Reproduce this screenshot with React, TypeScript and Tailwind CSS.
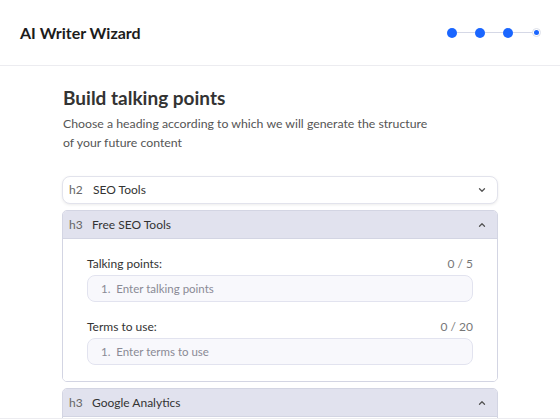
import React from "react";

const Chevron = ({ up }: { up?: boolean }) => (
  <svg width="10" height="10" viewBox="0 0 10 10" fill="none" className="text-[#555]">
    <path
      d={up ? "M2.5 6.3 L5 3.8 L7.5 6.3" : "M2.5 3.8 L5 6.3 L7.5 3.8"}
      stroke="currentColor"
      strokeWidth="1.3"
      strokeLinecap="round"
      strokeLinejoin="round"
    />
  </svg>
);

const Stepper = () => (
  <div className="flex items-center">
    <span className="w-[10px] h-[10px] rounded-full bg-[#1a66ff]" />
    <span className="w-[18px] h-px bg-[#d5d8e6]" />
    <span className="w-[10px] h-[10px] rounded-full bg-[#1a66ff]" />
    <span className="w-[18px] h-px bg-[#d5d8e6]" />
    <span className="w-[10px] h-[10px] rounded-full bg-[#1a66ff]" />
    <span className="w-[19px] h-px bg-[#d5d8e6]" />
    <span className="w-[9px] h-[9px] rounded-full border border-[#dcdfe9] bg-white flex items-center justify-center">
      <span className="w-[5px] h-[5px] rounded-full bg-[#1a66ff]" />
    </span>
  </div>
);

const Field = ({ label, count, placeholder }: { label: string; count: string; placeholder: string }) => (
  <div>
    <div className="flex justify-between text-[12px] leading-[16px] mb-[3px]">
      <span className="text-[#333]">{label}</span>
      <span className="text-[#777]">{count}</span>
    </div>
    <div className="h-[27px] rounded-[8px] border border-[#e2e3ef] bg-[#f8f8fc] flex items-center px-[13px] text-[11.5px] text-[#8a8a95]">
      1.&nbsp;&nbsp;{placeholder}
    </div>
  </div>
);

const SectionHead = ({ tag, title }: { tag: string; title: string }) => (
  <div className="h-[28px] bg-[#e1e2ee] border-b border-[#d3d5e3] flex items-center pl-[6px] pr-[10px] text-[12px]">
    <span className="text-[#666] w-[23px]">{tag}</span>
    <span className="text-[#333] flex-1">{title}</span>
    <Chevron up />
  </div>
);

export default function App() {
  return (
    <div className="w-[560px] h-[420px] bg-white overflow-hidden" style={{ fontFamily: "Lato, 'Open Sans', sans-serif" }}>
      <header className="h-[66px] border-b border-[#ececf0] flex items-center justify-between pl-[20px] pr-[19px]">
        <h1 className="text-[16px] font-bold text-[#1c1c1c]">AI Writer Wizard</h1>
        <Stepper />
      </header>
      <main className="h-[352px] overflow-hidden px-[62px] pt-[20px]">
        <h2 className="text-[19px] font-bold text-[#333] leading-[24px] pl-px">Build talking points</h2>
        <p className="text-[12.3px] leading-[19px] text-[#555] mt-[4px] w-[368px] pl-px">
          Choose a heading according to which we will generate the structure of your future content
        </p>
        <div className="mt-[24px] flex flex-col gap-[6px] w-[436px]">
          <div className="h-[28px] rounded-[8px] border border-[#e2e3ec] bg-white shadow-[0_1px_3px_rgba(0,0,0,0.08)] flex items-center pl-[6px] pr-[10px] text-[12px]">
            <span className="text-[#666] w-[24px]">h2</span>
            <span className="text-[#333] flex-1">SEO Tools</span>
            <Chevron />
          </div>
          <div className="rounded-[5px] border border-[#d3d5e3] overflow-hidden">
            <SectionHead tag="h3" title="Free SEO Tools" />
            <div className="bg-white px-[24px] pt-[17px] pb-[16px] flex flex-col gap-[17px]">
              <Field label="Talking points:" count="0 / 5" placeholder="Enter talking points" />
              <Field label="Terms to use:" count="0 / 20" placeholder="Enter terms to use" />
            </div>
          </div>
          <div className="rounded-[5px] border border-[#d3d5e3] overflow-hidden">
            <SectionHead tag="h3" title="Google Analytics" />
            <div className="h-[40px] bg-white" />
          </div>
        </div>
      </main>
      <footer className="h-[2px] border-t border-[#ececf0] bg-white" />
    </div>
  );
}
